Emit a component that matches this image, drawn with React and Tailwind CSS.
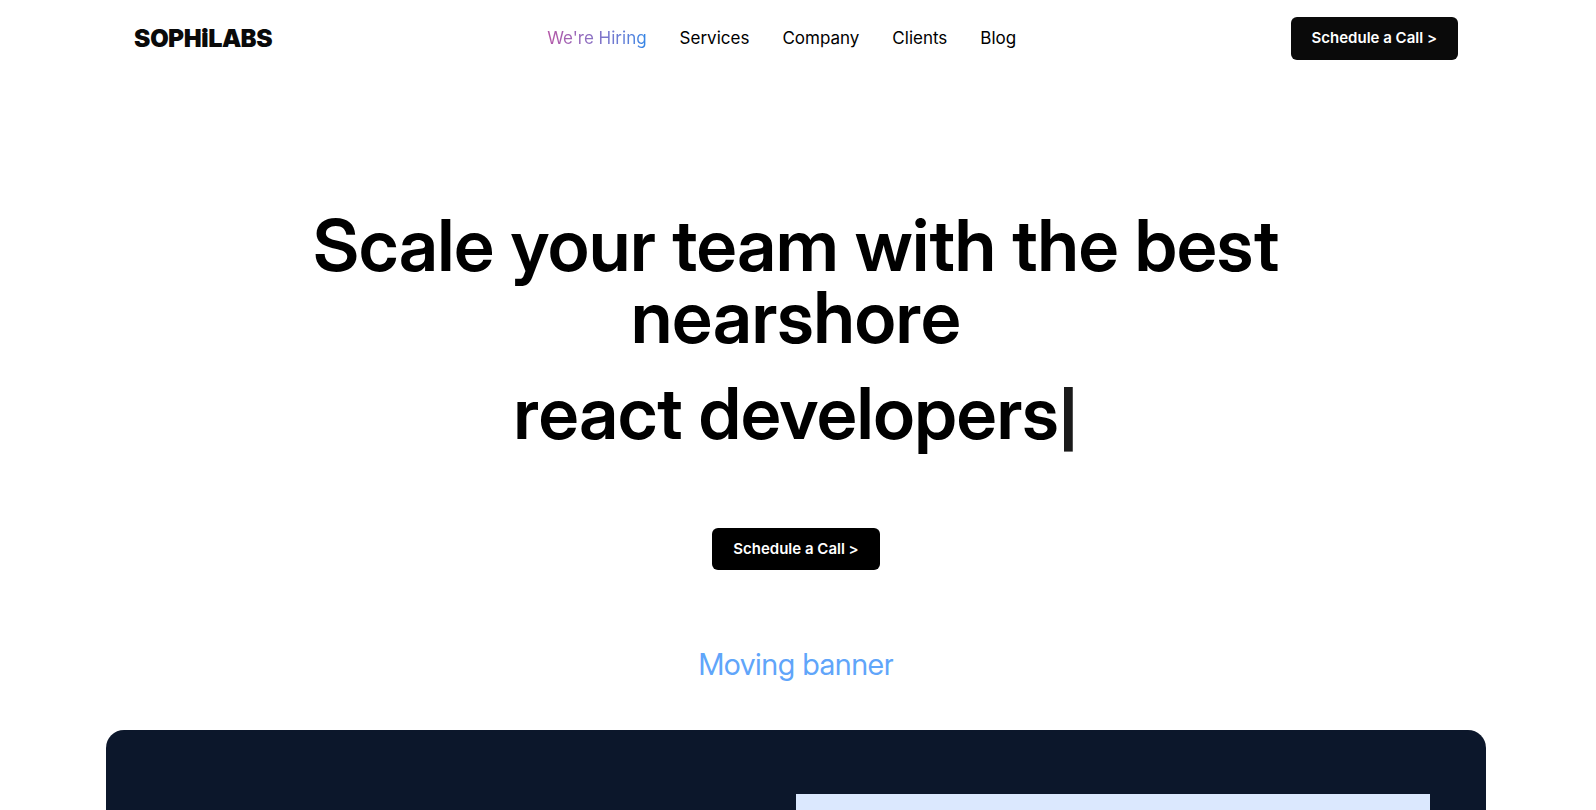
const links = ["Services", "Company", "Clients", "Blog"];

function CallButton({ className }) {
  return (
    <button
      type="button"
      className={`rounded-md px-[21px] text-[15px] font-semibold whitespace-nowrap text-white ${className}`}
    >
      Schedule a Call &gt;
    </button>
  );
}

export default function App() {
  return (
    <div className="min-h-screen bg-white pr-1 font-['Inter','Liberation_Sans',sans-serif] text-black">
      <header className="mx-auto flex max-w-[1380px] items-center justify-between px-7 pt-[17px]">
        <a
          href="#home"
          className="font-['Inter_Display','Inter',sans-serif] text-2xl leading-8 font-black text-[#0a0a0a]"
        >
          SOPH<span className="text-[26px] leading-none">i</span>LABS
        </a>
        <nav aria-label="Main" className="flex items-center gap-[33px] text-[17px]">
          <a
            href="#careers"
            className="bg-linear-to-r from-[#b455a6] to-[#2f86e6] bg-clip-text text-transparent"
          >
            We're Hiring
          </a>
          {links.map((label) => (
            <a key={label} href={`#${label.toLowerCase()}`}>
              {label}
            </a>
          ))}
        </nav>
        <CallButton className="h-[43px] bg-[#0a0a0a]" />
      </header>

      <main className="mx-auto max-w-[1380px]">
        <section className="flex flex-col items-center pt-[149px] text-center">
          <h1 className="flex max-w-[1024px] flex-col gap-6 font-['Inter_Display','Inter',sans-serif] text-7xl leading-none font-semibold">
            <span>Scale your team with the best nearshore</span>
            <span>
              react developers<span className="text-[54px] leading-none font-extrabold text-[#1a1a1a]">|</span>
            </span>
          </h1>
          <CallButton className="mt-[79px] h-[42px] bg-black" />
          <p className="mt-[76px] font-['Inter_Display','Inter',sans-serif] text-3xl leading-9 text-[#60a5fa]">Moving banner</p>
        </section>

        <section aria-label="Featured work" className="mt-12 h-[600px] rounded-[18px] bg-[#0c172b] px-14 pt-16">
          <div className="ml-auto h-[400px] w-1/2 bg-[#dbe8fe]" />
        </section>
      </main>
    </div>
  );
}
